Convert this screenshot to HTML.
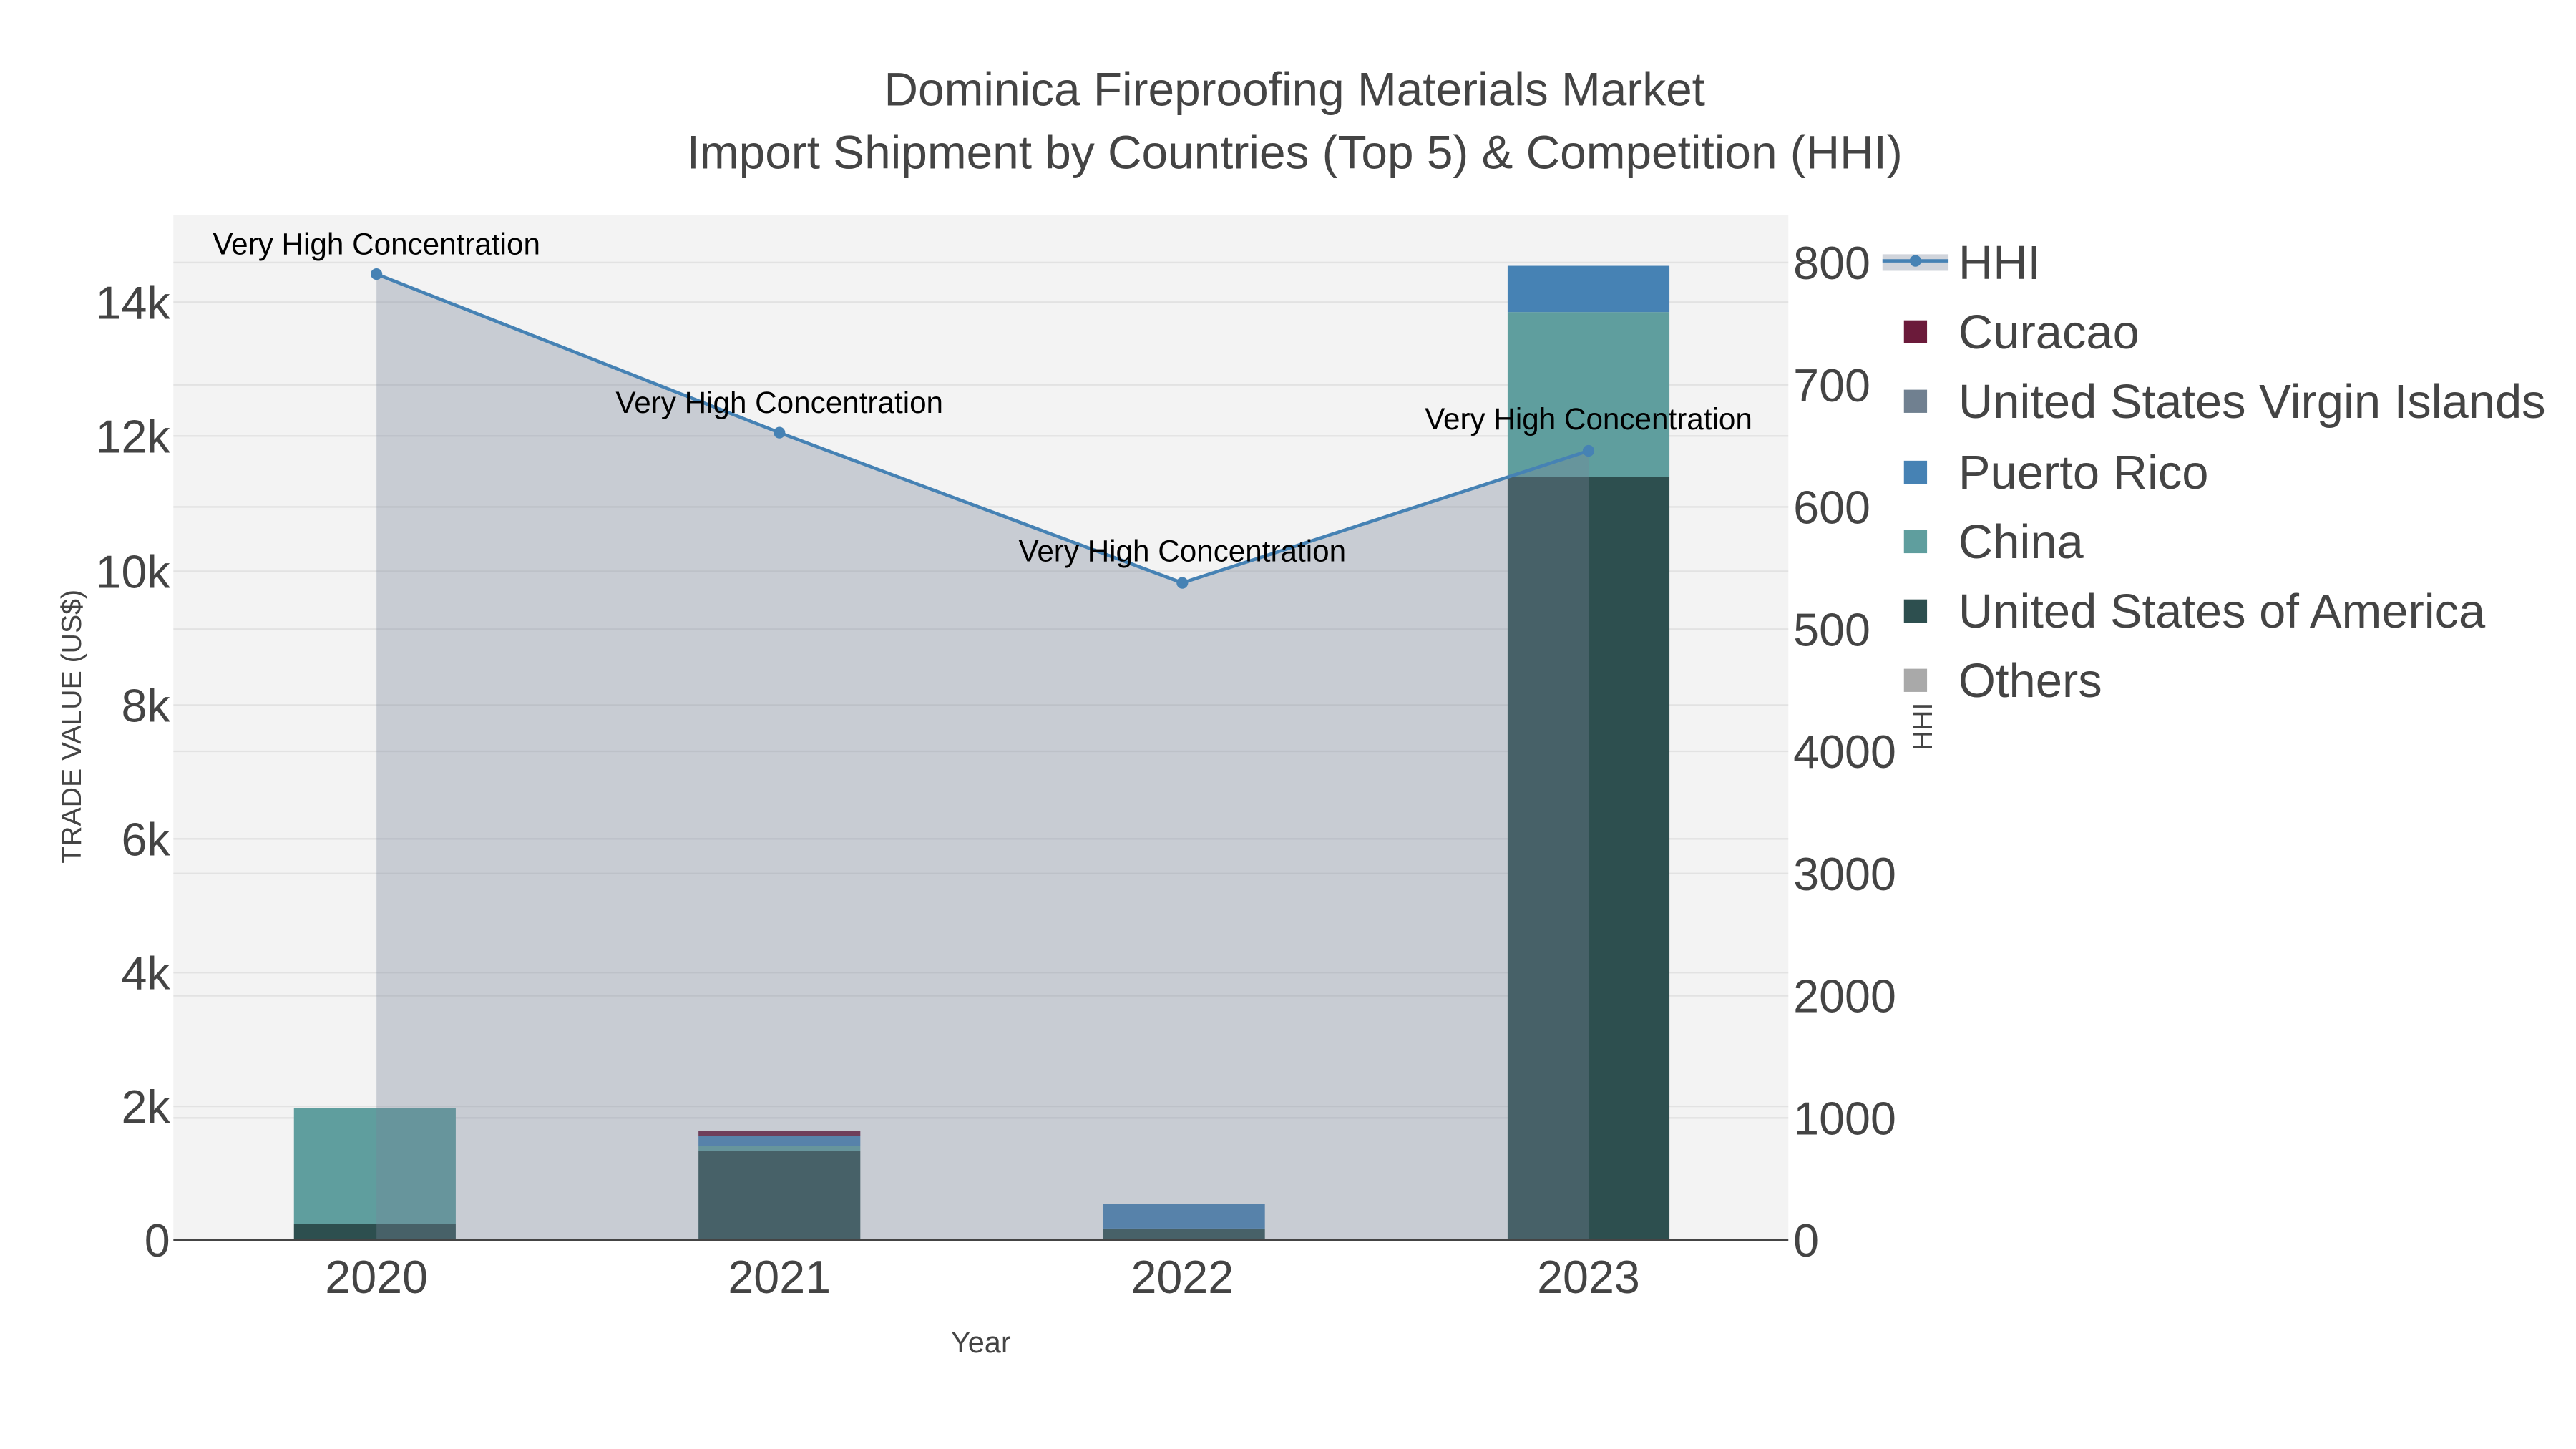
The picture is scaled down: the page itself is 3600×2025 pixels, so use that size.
<!DOCTYPE html>
<html><head><meta charset="utf-8"><style>html,body{margin:0;padding:0;background:#fff}svg{display:block}</style></head>
<body>
<svg xmlns="http://www.w3.org/2000/svg" width="3600" height="2025" viewBox="0 0 1560 877.5" font-family="Liberation Sans, sans-serif">
<rect width="1560" height="877.5" fill="#fff"/>
<rect x="105" y="130" width="978" height="621" fill="#f3f3f3"/>
<g stroke="#e2e2e2" stroke-width="1">
<line x1="105" x2="1083" y1="670" y2="670"/><line x1="105" x2="1083" y1="589" y2="589"/><line x1="105" x2="1083" y1="508" y2="508"/><line x1="105" x2="1083" y1="427" y2="427"/><line x1="105" x2="1083" y1="346" y2="346"/><line x1="105" x2="1083" y1="264" y2="264"/><line x1="105" x2="1083" y1="183" y2="183"/>
<line x1="105" x2="1083" y1="677" y2="677"/><line x1="105" x2="1083" y1="603" y2="603"/><line x1="105" x2="1083" y1="529" y2="529"/><line x1="105" x2="1083" y1="455" y2="455"/><line x1="105" x2="1083" y1="381" y2="381"/><line x1="105" x2="1083" y1="307" y2="307"/><line x1="105" x2="1083" y1="233" y2="233"/><line x1="105" x2="1083" y1="159" y2="159"/>
</g>
<rect x="178" y="671" width="98" height="70" fill="#5f9e9e"/>
<rect x="178" y="741" width="98" height="10" fill="#2d4f4f"/>
<rect x="423" y="697" width="98" height="54" fill="#2d4f4f"/>
<rect x="423" y="694" width="98" height="3" fill="#5f9e9e"/>
<rect x="423" y="688" width="98" height="6" fill="#4682b4"/>
<rect x="423" y="685" width="98" height="3" fill="#6b1a3a"/>
<rect x="668" y="744" width="98" height="7" fill="#2d4f4f"/>
<rect x="668" y="729" width="98" height="15" fill="#4682b4"/>
<rect x="913" y="289" width="98" height="462" fill="#2d4f4f"/>
<rect x="913" y="189" width="98" height="100" fill="#5f9e9e"/>
<rect x="913" y="161" width="98" height="28" fill="#4682b4"/>
<path d="M228,166 L472,262 L716,353 L962,273 L962,751 L228,751 Z" fill="rgba(120,131,151,0.35)"/>
<line x1="105" x2="1083" y1="751" y2="751" stroke="#444" stroke-width="1"/>
<polyline points="228,166 472,262 716,353 962,273" fill="none" stroke="#4682b4" stroke-width="2"/>
<g fill="#4682b4"><circle cx="228" cy="166" r="3.5"/><circle cx="472" cy="262" r="3.5"/><circle cx="716" cy="353" r="3.5"/><circle cx="962" cy="273" r="3.5"/></g>
<g font-size="18.3" fill="#000" text-anchor="middle">
<text x="228" y="154">Very High Concentration</text>
<text x="472" y="250">Very High Concentration</text>
<text x="716" y="340">Very High Concentration</text>
<text x="962" y="260">Very High Concentration</text>
</g>
<g font-size="28.5" fill="#444" text-anchor="middle">
<text x="784" y="64">Dominica Fireproofing Materials Market</text>
<text x="784" y="102">Import Shipment by Countries (Top 5) &amp; Competition (HHI)</text>
</g>
<g font-size="28" fill="#444" text-anchor="end">
<text x="103" y="761">0</text><text x="103" y="680">2k</text><text x="103" y="599">4k</text><text x="103" y="518">6k</text><text x="103" y="437">8k</text><text x="103" y="356">10k</text><text x="103" y="274">12k</text><text x="103" y="193">14k</text>
</g>
<g font-size="28" fill="#444">
<text x="1086" y="761">0</text><text x="1086" y="687">1000</text><text x="1086" y="613">2000</text><text x="1086" y="539">3000</text><text x="1086" y="465">4000</text><text x="1086" y="391">500</text><text x="1086" y="317">600</text><text x="1086" y="243">700</text><text x="1086" y="169">800</text>
</g>
<g font-size="28" fill="#444" text-anchor="middle">
<text x="228" y="783">2020</text><text x="472" y="783">2021</text><text x="716" y="783">2022</text><text x="962" y="783">2023</text>
</g>
<text x="594" y="819" font-size="18" fill="#444" text-anchor="middle">Year</text>
<text transform="translate(49,440) rotate(-90)" font-size="17" fill="#444" text-anchor="middle">TRADE VALUE (US$)</text>
<text transform="translate(1170,440) rotate(-90)" font-size="17" fill="#444" text-anchor="middle">HHI</text>
<rect x="1140" y="154" width="40" height="10" fill="rgba(120,131,151,0.35)"/>
<line x1="1140" x2="1180" y1="158" y2="158" stroke="#4682b4" stroke-width="2"/>
<circle cx="1160" cy="158" r="3.5" fill="#4682b4"/>
<rect x="1153" y="194" width="14" height="14" fill="#6b1a3a"/>
<rect x="1153" y="236" width="14" height="14" fill="#708090"/>
<rect x="1153" y="279" width="14" height="14" fill="#4682b4"/>
<rect x="1153" y="321" width="14" height="14" fill="#5f9e9e"/>
<rect x="1153" y="363" width="14" height="14" fill="#2d4f4f"/>
<rect x="1153" y="405" width="14" height="14" fill="#a9a9a9"/>
<g font-size="29" fill="#444">
<text x="1186" y="169">HHI</text>
<text x="1186" y="211">Curacao</text>
<text x="1186" y="253">United States Virgin Islands</text>
<text x="1186" y="296">Puerto Rico</text>
<text x="1186" y="338">China</text>
<text x="1186" y="380">United States of America</text>
<text x="1186" y="422">Others</text>
</g>
</svg>
</body></html>
